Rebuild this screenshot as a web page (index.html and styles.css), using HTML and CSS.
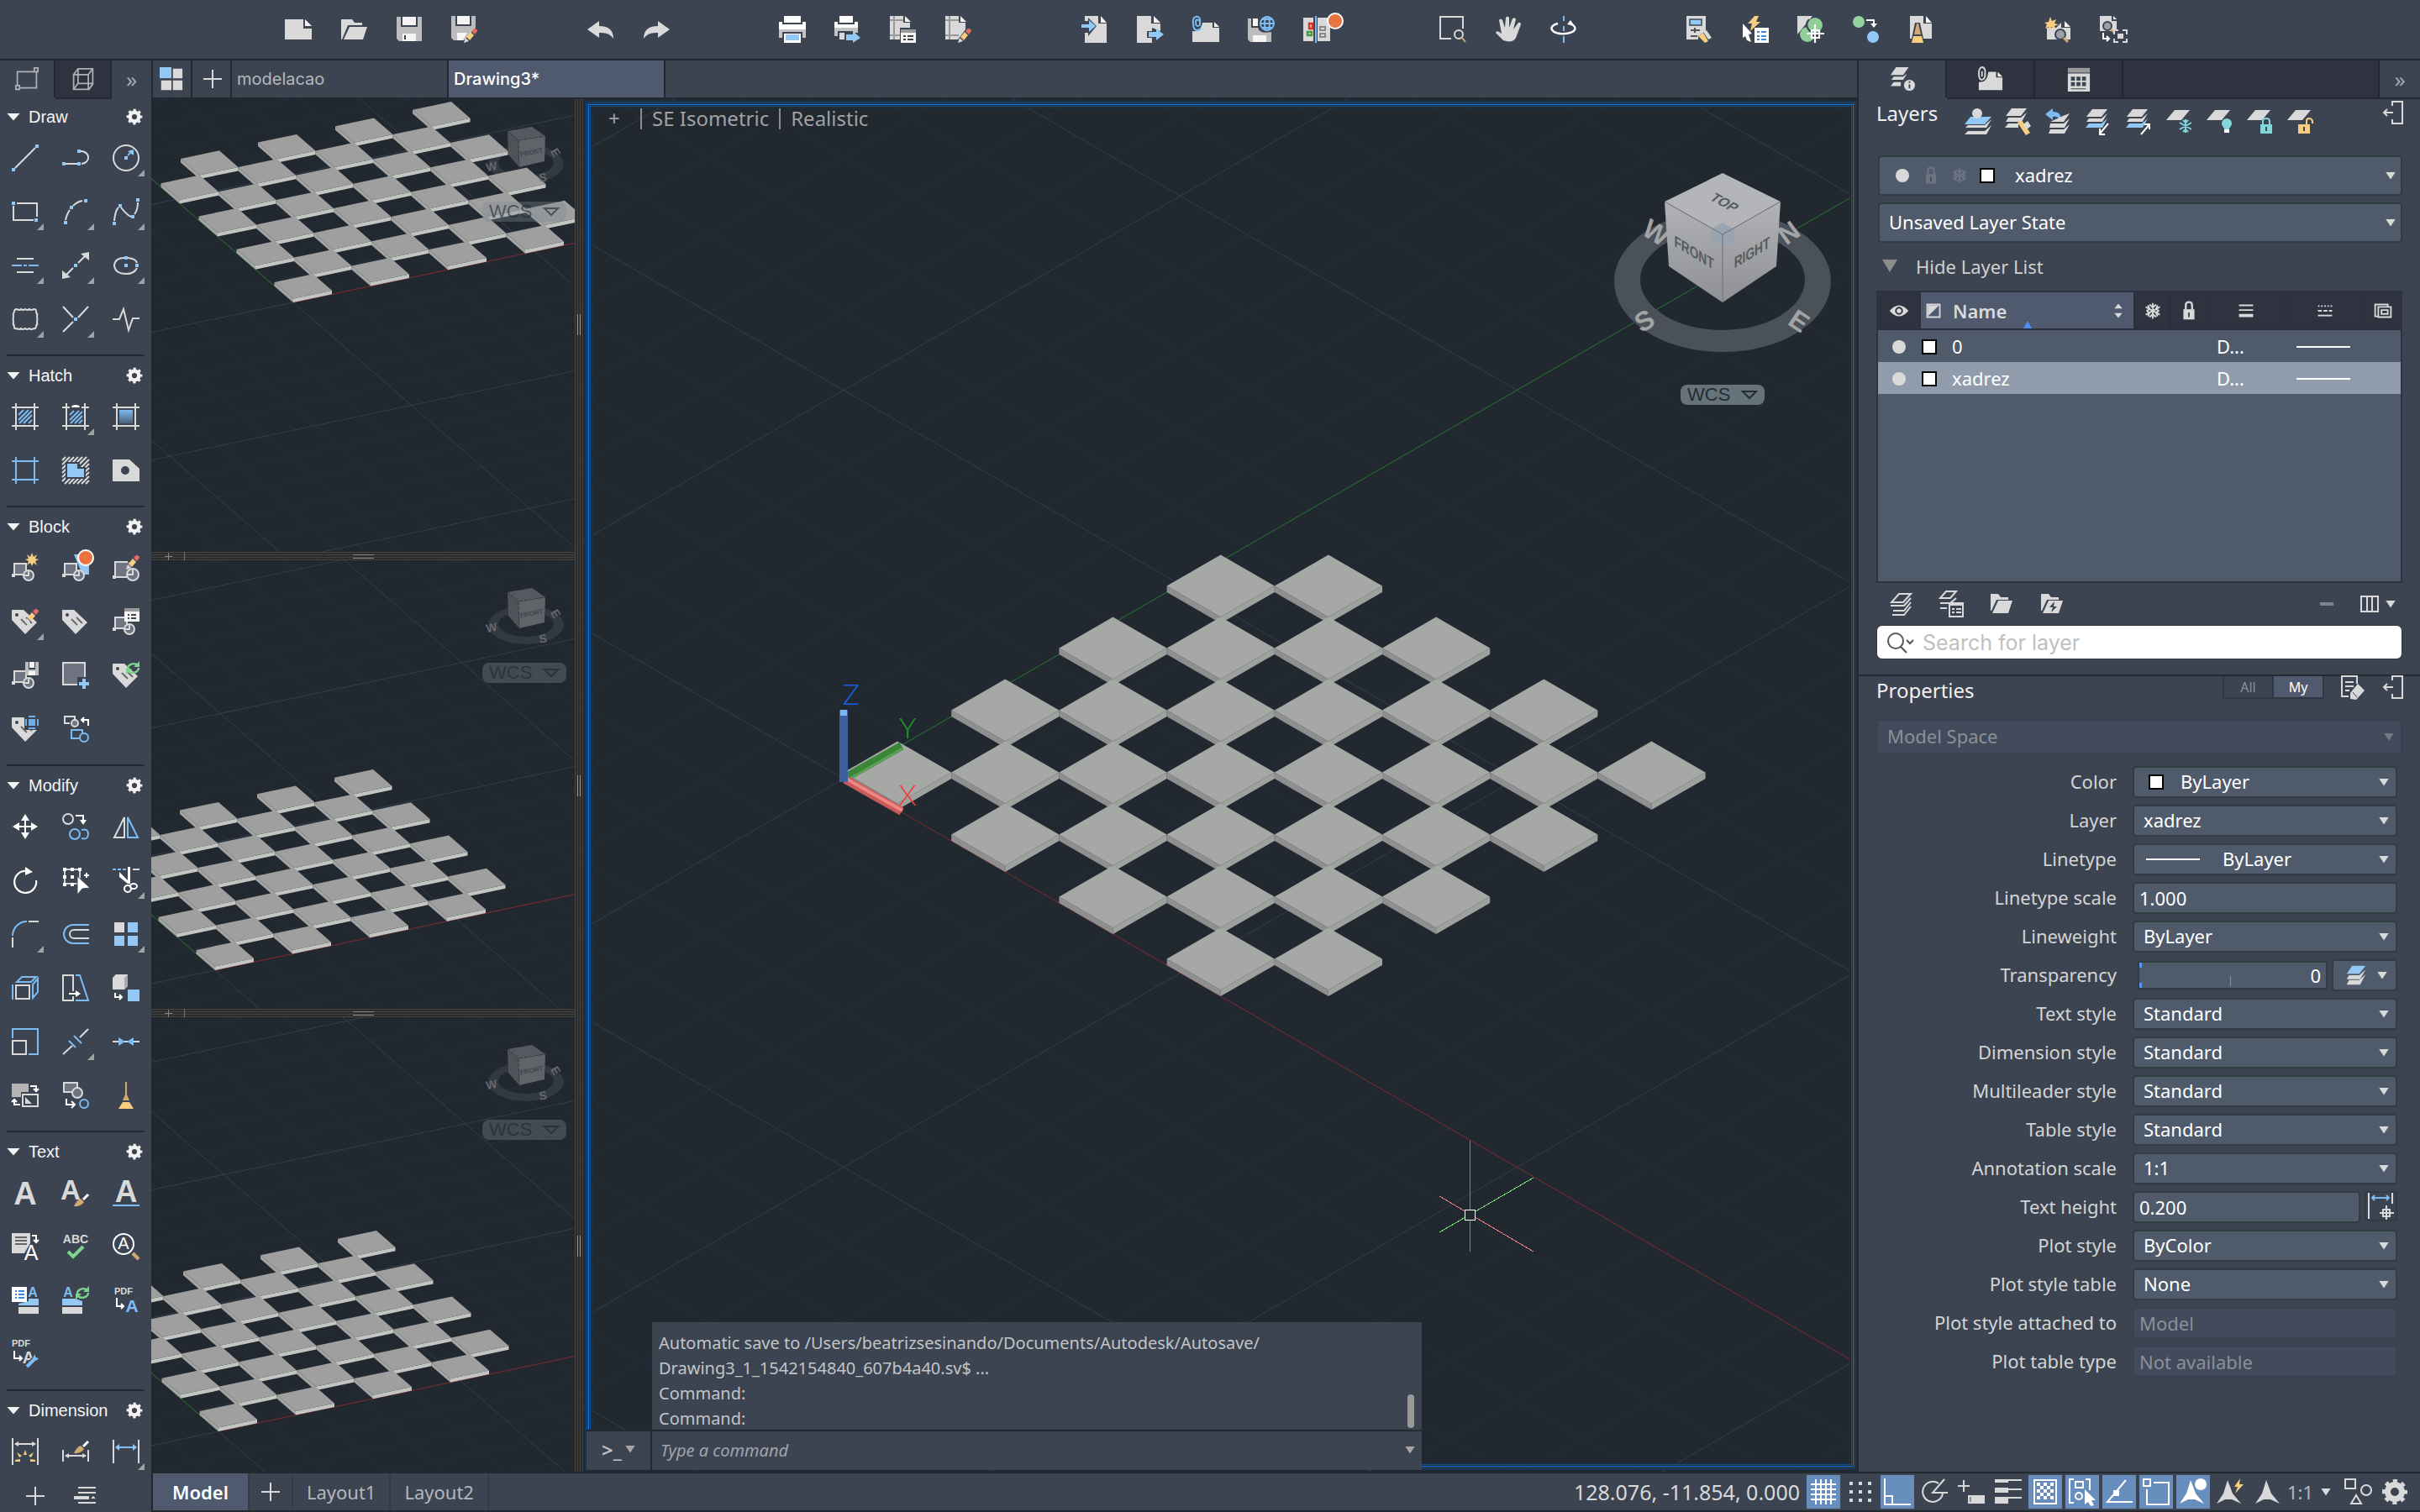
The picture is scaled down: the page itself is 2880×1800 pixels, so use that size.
FILE: index.html
```html
<!DOCTYPE html>
<html lang="en">
<head>
    <meta charset="utf-8">
    <meta name="viewport" content="width=device-width, initial-scale=1">
    <title>Drawing3</title>
    <link rel="stylesheet" href="styles.css">
</head>
<body>

<svg class="paints" aria-hidden="true">
    <defs>
        <linearGradient id="fade" x1="0" y1="0" x2="0" y2="1"><stop offset="0" stop-color="#7cbcf3"/><stop offset="1" stop-color="#4d6078"/></linearGradient>
        <linearGradient id="cubeFace" x1="0" y1="0" x2="0" y2="1"><stop offset="0" stop-color="#b0b2b5"/><stop offset="1" stop-color="#8f9194"/></linearGradient>
    </defs>
</svg>

<!-- icon sprite -->
<svg class="sprite" aria-hidden="true">
    <defs>
        <g id="pencil"><path fill="#f7cd80" d="M5 5L9 9L4 15L0 11Z"/><path fill="#e96a62" d="M6 4L9 1Q13 1 13 4L10 8Z"/><path fill="#d9d9d9" d="M-1 12L3 16L-3 18Z"/></g>
        <g id="blockmini"><path fill="#6f7480" d="M3 9H17V23H3Z"/><path class="sl" d="M3 24V9H17V17M3 22H14"/><path class="fl" d="M0 21h4v4H0z"/><circle cx="20" cy="23" r="6" class="ring"/><path class="sl" d="M20 17V23H15"/></g>
        <g id="tag"><path class="fl" d="M0 2H14L30 17L16 31L0 14Z"/><circle cx="6" cy="8" r="2" fill="#3c4452"/><path stroke="#6b6b6b" stroke-width="2" d="M11 13L18 20M17 11L24 18"/></g>
        <g id="cycle"><path fill="none" stroke="#7fd48b" stroke-width="2.4" d="M2 9A7 6 0 0 1 14 5M15 8A7 6 0 0 1 3 12"/><path fill="#7fd48b" d="M16 0V7H9ZM0 16V9H7Z"/></g>
        <g id="floppy"><path fill="#bdbdbd" d="M0 0H4V9H12V0H16V16H2L0 14Z"/><path fill="#f4f4f4" d="M5 0H11V7H5ZM4 11H12V16H4Z"/></g>
    </defs>

    <symbol id="new" viewBox="0 0 32 32"><path class="fl" d="M0 4H22V15H32V28H0Z"/><path fill="#f4f4f4" d="M24 4L32 12H24Z"/></symbol>
    <symbol id="open" viewBox="0 0 32 32"><path class="fl" d="M1 4H14L17 8H26V11H9L2 28H1ZM11 13H32L27 28H4Z"/></symbol>
    <symbol id="save" viewBox="0 0 32 32"><path fill="#bdbdbd" d="M1 1H6V13H26V1H31V30H4L1 27Z"/><path fill="#f4f4f4" d="M8 1H24V11H8ZM8 21H24V30H8Z"/><path fill="#3c4452" d="M10 23h2v5h-2z"/></symbol>
    <symbol id="saveas" viewBox="0 0 32 32"><path fill="#bdbdbd" d="M0 0H5V12H24V0H29V14L15 29H3L0 26Z"/><path fill="#f4f4f4" d="M7 0H22V10H7ZM7 20H19L14 29H7Z"/><use href="#pencil" x="18" y="14"/></symbol>
    <symbol id="undo" viewBox="0 0 32 32"><path class="fl" d="M0 16L14 6V12Q31 12 31 27Q26 19 14 20V26Z"/></symbol>
    <symbol id="redo" viewBox="0 0 32 32"><path class="fl" d="M32 16L18 6V12Q1 12 1 27Q6 19 18 20V26Z"/></symbol>
    <symbol id="print" viewBox="0 0 32 32"><path fill="#fff" d="M6 0H26V8H6ZM0 7H4V10H28V7H32V16H0Z"/><path fill="#c4c4c4" d="M0 16H32V26H28V19H4V26H0Z"/><path fill="#fff" d="M6 21H26V32H6Z"/><path class="fb" d="M8 22H24V29H8Z"/></symbol>
    <symbol id="plot" viewBox="0 0 32 32"><path fill="#fff" d="M6 0H22V8H6ZM0 7H4V10H24V7H28V14H0Z"/><path fill="#c4c4c4" d="M0 14H28V20H22V18H4V24H0Z"/><path class="fl" d="M6 20H12V28H6Z"/><path class="fb" d="M14 22H22V18L31 26L22 32V29H14Z"/></symbol>
    <symbol id="pagesetup" viewBox="0 0 32 32"><path class="fl" d="M0 0H16V8H24V14H12V28H0Z"/><path fill="#f4f4f4" d="M18 0L25 7H18Z"/><path stroke="#999" stroke-width="2" d="M0 5H16M5 0V28M0 23H12"/><path fill="#f4f4f4" d="M13 20H31V32H13Z"/><path fill="#999" d="M13 16H31V20H13Z"/><path stroke="#444" stroke-width="2" d="M16 24h3M21 24h7M16 28h3M21 28h7"/></symbol>
    <symbol id="plotstyle" viewBox="0 0 32 32"><path class="fl" d="M0 0H16V8H24V16L15 28H0Z"/><path fill="#f4f4f4" d="M18 0L25 7H18Z"/><path stroke="#999" stroke-width="2" d="M0 5H16M5 0V28M0 23H16"/><use href="#pencil" x="18" y="14"/></symbol>
    <symbol id="import" viewBox="0 0 32 32"><path class="fl" d="M4 0H20V9H30V32H4V20H8V24L18 12L8 2V6H4Z"/><path fill="#f4f4f4" d="M23 0L30 8H23Z"/><path class="fb" d="M0 10H9V5L17 12L9 19V14H0Z"/></symbol>
    <symbol id="export" viewBox="0 0 32 32"><path class="fl" d="M0 0H17V9H28V18L18 14V18H12V26H18V32H0Z"/><path fill="#f4f4f4" d="M20 0L28 8H20Z"/><path class="fb" d="M14 19H23V15L32 22L23 29V25H14Z"/></symbol>
    <symbol id="attach" viewBox="0 0 32 32"><path class="fl" d="M0 18Q10 20 12 8H24V14H32V31H0Z"/><path fill="#f4f4f4" d="M26 7L32 13H26Z"/><path class="sb" d="M9 6Q4 2 4 8T9 11V4Q8 0 4 1Q0 2 1 9Q1 17 6 17Q10 16 10 14"/></symbol>
    <symbol id="saveweb" viewBox="0 0 32 32"><path fill="#bdbdbd" d="M0 3H4V14H12Q14 22 28 19V31H3L0 28Z"/><path fill="#f4f4f4" d="M6 3H12V12H6ZM6 23H22V31H6Z"/><g class="sb"><circle cx="23" cy="9" r="8"/><ellipse cx="23" cy="9" rx="3" ry="8"/><path d="M15 9H31M17 4H29M17 14H29"/></g></symbol>
    <symbol id="compare" viewBox="0 0 32 32"><path class="fl" d="M0 2H12V30H0ZM17 2H32V30H17Z"/><path stroke="#7cbcf3" stroke-width="2" d="M15 0V32"/><path fill="none" stroke="#e03127" stroke-width="2.4" d="M7 9h4v6H7z"/><path fill="none" stroke="#3f9c3f" stroke-width="2.4" d="M5 19h5v4H5z"/><path fill="none" stroke="#888" stroke-width="2" d="M20 13h6v4h-6zM20 21h6v4h-6z"/><circle cx="38" cy="6" r="9" fill="#ea7440" stroke="#fff" stroke-width="2"/></symbol>
    <symbol id="zoom" viewBox="0 0 32 32"><path class="sl" d="M14 27H1V1H28V15"/><circle cx="23" cy="22" r="5" class="sl"/><path stroke="#d3a972" stroke-width="2" d="M27 26L31 31"/></symbol>
    <symbol id="pan" viewBox="0 0 32 32"><path class="fl" d="M10 29L1 20Q2 16 8 21L5 5Q7 2 9 5L12 14L13 2Q15-1 17 2V14L21 3Q24 1 25 4L22 16L28 8Q31 7 31 10L25 26Q21 33 10 29Z"/></symbol>
    <symbol id="orbit" viewBox="0 0 32 32"><path class="sb" d="M16 0V6M16 12V18M16 24V32"/><path fill="none" stroke="#fff" stroke-width="2.4" d="M9 9A14 6.500 0 1 0 25 10"/><path fill="#fff" d="M20 10L24 5L29 12Z"/></symbol>
    <symbol id="calc" viewBox="0 0 32 32"><path class="fl" d="M0 0H23V18L14 24V28H0Z"/><path class="fb" stroke="#3c4452" stroke-width="1.500" d="M4 4H18V11H4Z"/><path stroke="#555" stroke-width="2" d="M5 17H16M10 14V20M5 24H13"/><path fill="#f7cd80" d="M14 24L20 20L26 30L22 32Z"/><path class="fl" d="M20 19L24 17L30 26L26 28Z"/></symbol>
    <symbol id="quicksel" viewBox="0 0 32 32"><path fill="#f7cd80" d="M15 0H20L17 7H22L10 18L12 9H7Z"/><path fill="#fff" d="M1 9L12 21L8 22L11 31L6 29L4 24L1 26Z"/><path fill="#fff" d="M15 14H32V32H15Z"/><path stroke="#3f87d8" stroke-width="2" d="M18 19h3M23 19h6M18 24h3M23 24h6M18 28h3M23 28h6"/></symbol>
    <symbol id="geo" viewBox="0 0 32 32"><path class="fl" d="M0 0H18L0 22Z"/><circle cx="21" cy="11" r="9" fill="#8fce97"/><circle cx="12" cy="22" r="9" fill="#8fce97"/><path stroke="#3c4452" stroke-width="2" fill="none" d="M14 4Q8 10 14 17Q20 20 20 28"/><path stroke="#fff" stroke-width="2.200" fill="none" d="M21 10V32M11 21H32M17 17H26V26H17Z"/></symbol>
    <symbol id="match" viewBox="0 0 32 32"><circle cx="7" cy="7" r="7" fill="#93d39c"/><circle cx="24" cy="25" r="7" class="fb"/><path stroke="#fff" stroke-width="2" fill="none" d="M16 5H25V10"/><path fill="#fff" d="M21 9H29L25 14Z"/></symbol>
    <symbol id="purge" viewBox="0 0 32 32"><path class="fl" d="M2 0H18V9H28V27H18L14 8H8L4 27H2Z"/><path fill="#f4f4f4" d="M21 0L28 8H21Z"/><path fill="#d3a972" d="M10 9H12L15 22H7Z"/><path fill="#f7cd80" d="M6 24H16L18 32H4Z"/></symbol>
    <symbol id="findnew" viewBox="0 0 32 32"><path class="fl" d="M3 14H14L20 8V14H31V28H3Z"/><path fill="#f4f4f4" d="M24 6L31 13H24Z"/><path fill="#f7cd80" d="M7 1L9 6L14 4L12 9L17 10L12 12L14 16L8 13L6 18L5 13L1 15L3 10L0 8L5 7Z"/><circle cx="19" cy="22" r="6" fill="#9aa0aa" stroke="#3c4452" stroke-width="2"/><path stroke="#d3a972" stroke-width="3" d="M23 26L28 31"/></symbol>
    <symbol id="findrep" viewBox="0 0 32 32"><path class="fl" d="M0 0H14V6H20V18H0Z"/><path fill="#f4f4f4" d="M16 0L20 4H16Z"/><circle cx="9" cy="12" r="5" fill="#9aa0aa" stroke="#3c4452" stroke-width="2"/><path stroke="#d3a972" stroke-width="2" d="M13 16L17 20"/><path stroke="#fff" stroke-width="2" fill="none" d="M4 20V27H11M8 24L11 27L8 30"/><path class="sl" d="M17 22V17H22M27 17H32V22M32 27V31H27M22 31H17V27"/><path class="fl" d="M21 21h7v6h-7z"/></symbol>

    <symbol id="sheet" viewBox="0 0 32 32"><path fill="none" stroke="#aeb1b6" stroke-width="2" d="M3 26V6H26M29 5V28H5"/><path fill="#3c4452" stroke="#aeb1b6" stroke-width="2" d="M26 1h5v5h-5zM1 25h5v5H1z"/></symbol>
    <symbol id="box3d" viewBox="0 0 32 32"><path fill="none" stroke="#aeb1b6" stroke-width="2" d="M3 10L9 2H29V23L24 30H3ZM3 10H23V30M23 10L29 2M9 2V22H29M9 22L3 30"/></symbol>
    <symbol id="tiles" viewBox="0 0 32 32"><path class="fb" d="M0 0H16V15H0Z"/><path class="fl" d="M18 2H31V15H18ZM2 18H16V31H2ZM18 18H31V31H18Z"/></symbol>
    <symbol id="plus" viewBox="0 0 32 32"><path class="sl" d="M16 5V27M5 16H27"/></symbol>
    <symbol id="gear" viewBox="0 0 32 32"><circle cx="16" cy="16" r="12" fill="none" stroke="currentColor" stroke-width="6" stroke-dasharray="4.710" stroke-dashoffset="2.350"/><circle cx="16" cy="16" r="8.500" fill="none" stroke="currentColor" stroke-width="7"/></symbol>

    <symbol id="line" viewBox="0 0 32 32"><path class="sl" d="M4 28L28 4"/><path class="fb" d="M0 28h4v4H0zM28 0h4v4h-4z"/></symbol>
    <symbol id="pline" viewBox="0 0 32 32"><path class="sl" d="M4 23H20M22 8a8 7 0 0 1 1 15"/><path class="fb" d="M0 21h4v4H0zM18 21h4v4h-4zM18 6h4v4h-4z"/></symbol>
    <symbol id="circle" viewBox="0 0 32 32"><circle cx="16" cy="16" r="15" class="sl"/><path class="fb" d="M14 14h4v4h-4zM25 6V13L18 8Z"/><path class="sb" d="M18 13L22 9"/></symbol>
    <symbol id="rect" viewBox="0 0 32 32"><path class="sl" d="M6 6H30V22M26 26H2V9"/><path class="fb" d="M0 4h4v4H0zM27 24h4v4h-4z"/></symbol>
    <symbol id="arc" viewBox="0 0 32 32"><path class="sl" d="M4 26Q5 20 9 14M13 9Q18 4 24 3"/><path class="fb" d="M2 27h4v4H2zM9 9h4v4H9zM26 1h4v4h-4z"/></symbol>
    <symbol id="spline" viewBox="0 0 32 32"><path class="sl" d="M2 27Q3 15 7 11M10 11Q17 20 22 22M26 19Q30 14 30 5"/><path class="fb" d="M0 28h4v4H0zM7 7h4v4H7zM22 20h4v4h-4zM28 0h4v4h-4z"/></symbol>
    <symbol id="mline" viewBox="0 0 32 32"><path class="sl" d="M6 8H26M6 24H26"/><path class="sb" d="M0 16H12M14 16H18M20 16H32"/></symbol>
    <symbol id="ray" viewBox="0 0 32 32"><path class="sl" d="M3 29L13 19M19 13L29 3"/><path class="fl" d="M32 0V10L22 2ZM0 32V22L10 30Z"/><path class="fb" d="M14 14h4v4h-4z"/></symbol>
    <symbol id="ellipse" viewBox="0 0 32 32"><path class="sl" d="M18 7Q28 8 29 13M29 19Q26 26 16 26Q3 26 2 16Q3 7 14 7"/><path class="fb" d="M14 5h4v4h-4zM14 14h4v4h-4zM27 14h4v4h-4z"/></symbol>
    <symbol id="cloud" viewBox="0 0 32 32"><path class="sl" d="M3 7Q3 4 6 4Q9 6 11 4Q13 6 16 4Q19 6 21 4Q23 6 26 4Q30 4 29 8Q31 10 30 13Q31 16 30 19Q31 22 29 24Q29 28 26 27Q23 29 21 27Q18 29 16 27Q13 29 11 27Q9 29 6 27Q2 28 3 24Q1 22 2 19Q1 16 2 13Q1 10 3 7Z"/></symbol>
    <symbol id="cline" viewBox="0 0 32 32"><path class="sl" d="M1 1L13 14M31 1L19 14M13 19L1 31"/><path class="fb" d="M14 14h4v4h-4z"/></symbol>
    <symbol id="helix" viewBox="0 0 32 32"><path class="sl" d="M0 16H8L13 4L19 29L24 15H32"/></symbol>

    <symbol id="hatch" viewBox="0 0 32 32"><path class="sl" d="M5 0V32M27 0V32M0 5H32M0 27H32"/><path class="sb" d="M8 14L14 8M8 20L20 8M9 24L24 9M14 24L24 14M20 24L24 20"/></symbol>
    <symbol id="hatch2" viewBox="0 0 32 32"><path class="sl" d="M5 0V32M27 0V32M0 5H9M23 5H32M0 27H32"/><path fill="#fff" d="M11 5Q11 2 16 2T21 5Z"/><path class="sb" d="M9 14L14 9M9 20L20 9M10 24L24 10M15 24L24 15M20 24L24 20"/></symbol>
    <symbol id="gradient" viewBox="0 0 32 32"><path class="sl" d="M5 0V32M27 0V32M0 5H32M0 27H32"/><path fill="url(#fade)" d="M8 8H24V24H8Z"/></symbol>
    <symbol id="boundary" viewBox="0 0 32 32"><path class="sb" d="M5 0V32M27 0V32M0 5H32M0 27H32"/></symbol>
    <symbol id="wipeout" viewBox="0 0 32 32"><path class="sl" d="M0 4L4 0M0 9L9 0M0 14L14 0M0 19L19 0M0 24L24 0M0 29L29 0M3 32L32 3M8 32L32 8M13 32L32 13M18 32L32 18M23 32L32 23M28 32L32 28"/><path fill="#3c4452" d="M4 6H21V12H28V26H4Z"/><path class="fb" d="M6 8H18V14H26V24H6Z"/></symbol>
    <symbol id="region" viewBox="0 0 32 32"><path class="fl" d="M0 3H20L32 14V29H0Z"/><circle cx="15" cy="16" r="5" fill="#3c4452"/></symbol>

    <symbol id="blknew" viewBox="0 0 32 32"><use href="#blockmini" y="2"/><path fill="#f7cd80" d="M24-2L26 3L30 0L28 5L32 6L28 8L30 13L26 10L24 14L22 10L18 13L20 8L16 6L20 5L18 0L22 3Z"/></symbol>
    <symbol id="blkins" viewBox="0 0 32 32"><path class="fb" d="M14 0H32V24H24Z"/><use href="#blockmini" y="2"/><circle cx="28" cy="4" r="9" fill="#ea7440" stroke="#fff" stroke-width="2"/></symbol>
    <symbol id="blkedit" viewBox="0 0 32 32"><path fill="#6f7480" d="M3 9H22V26H3Z"/><path class="sl" d="M3 28V9H18M3 27H17"/><path class="fl" d="M0 25h4v4H0z"/><circle cx="24" cy="24" r="7" class="ring"/><path class="sl" d="M24 17V24H18"/><use href="#pencil" x="19" y="0"/></symbol>
    <symbol id="tagedit" viewBox="0 0 32 32"><use href="#tag"/><use href="#pencil" x="19" y="0"/></symbol>
    <symbol id="tagicon" viewBox="0 0 32 32"><use href="#tag"/></symbol>
    <symbol id="blklist" viewBox="0 0 32 32"><use href="#blockmini" y="2"/><path fill="#999" d="M14 0H32V4H14Z"/><path fill="#f4f4f4" d="M14 4H32V16H14Z"/><path stroke="#444" stroke-width="2" d="M18 8h2M22 8h6M18 12h2M22 12h6"/></symbol>
    <symbol id="blksave" viewBox="0 0 32 32"><use href="#blockmini" y="2"/><use href="#floppy" x="16"/></symbol>
    <symbol id="blkadd" viewBox="0 0 32 32"><path fill="#6f7480" stroke="#d9d9d9" stroke-width="2" d="M1 1H27V27H1Z"/><path fill="#3c4452" d="M18 18H30V30H18Z"/><path class="fb" d="M24 20h4v4h4v4h-4v4h-4v-4h-4v-4h4z"/></symbol>
    <symbol id="tagsync" viewBox="0 0 32 32"><use href="#tag"/><use href="#cycle" x="16" y="-1"/></symbol>
    <symbol id="tagview" viewBox="0 0 32 32"><use href="#tag"/><path fill="#3c4452" d="M15-1H33V17H15Z"/><path fill="#72aee6" d="M20 4h8v8h-8zM20 0h8v2h-8zM20 14h8v2h-8zM16 4h2v8h-2zM30 4h2v8h-2z"/></symbol>
    <symbol id="blkrep" viewBox="0 0 32 32"><path class="sl" d="M3 10V1H15V8M3 9H9"/><circle cx="15" cy="9" r="4" class="ring"/><path class="sb" d="M11 27V17H24V22M10 27H20"/><circle cx="26" cy="26" r="5" class="sb"/><path stroke="#fff" stroke-width="2" fill="none" d="M31 12V5H23M26 2L23 5L26 8"/></symbol>

    <symbol id="move" viewBox="0 0 32 32"><path stroke="#fff" stroke-width="2" d="M16 4V28M4 16H28"/><path fill="#fff" d="M16 1L21 9H11ZM16 31L21 23H11ZM1 16L9 11V21ZM31 16L23 11V21Z"/></symbol>
    <symbol id="copy" viewBox="0 0 32 32"><circle cx="7" cy="7" r="6" class="sl"/><circle cx="15" cy="25" r="6" class="sb"/><path class="sb" d="M23 20Q31 18 31 25T23 30"/><path stroke="#fff" stroke-width="2" fill="none" d="M16 3H25V9"/><path fill="#fff" d="M21 8H29L25 14Z"/></symbol>
    <symbol id="mirror" viewBox="0 0 32 32"><path class="sl" d="M14 5V29H2Z"/><path class="sb" d="M18 5V29H30Z"/></symbol>
    <symbol id="rotate" viewBox="0 0 32 32"><path fill="none" stroke="#fff" stroke-width="2.200" d="M17 5A13 13 0 1 0 29 16"/><path fill="#fff" d="M16 0L25 6L16 10Z"/></symbol>
    <symbol id="stretch" viewBox="0 0 32 32"><path fill="none" stroke="#fff" stroke-width="1.500" d="M3 3H21V20H3Z"/><path fill="#fff" d="M1 1h4v4H1zM10 1h4v4h-4zM19 1h4v4h-4zM1 10h4v4H1zM10 10h4v4h-4zM1 19h4v4H1zM10 19h4v4h-4z"/><path fill="#fff" stroke="#3c4452" d="M18 11L33 25L24 26L18 33Z"/><path stroke="#fff" stroke-width="2" d="M26 10h6M29 7v6"/></symbol>
    <symbol id="trim" viewBox="0 0 32 32"><path class="sb" d="M0 3H4M6 3H10M12 3H16"/><path class="sl" d="M24 3H32"/><path fill="#fff" d="M8 6L20 18L18 20L8 12ZM18 0H21V20H18Z"/><circle cx="18" cy="26" r="4" fill="none" stroke="#fff" stroke-width="2"/><ellipse cx="25" cy="23" rx="4" ry="3" fill="none" stroke="#fff" stroke-width="2"/></symbol>
    <symbol id="fillet" viewBox="0 0 32 32"><path class="sb" d="M1 18A17 17 0 0 1 18 1"/><path class="sl" d="M20 1H32M1 20V32"/></symbol>
    <symbol id="offset" viewBox="0 0 32 32"><path class="sb" d="M32 5H13A11 11 0 0 0 13 27H32"/><path class="sl" d="M32 11H14A5 5 0 0 0 14 21H32"/></symbol>
    <symbol id="array" viewBox="0 0 32 32"><path class="fl" d="M2 2H14V14H2Z"/><path class="fb" d="M18 2H30V14H18ZM2 18H14V30H2ZM18 18H30V30H18Z"/></symbol>
    <symbol id="presspull" viewBox="0 0 32 32"><path class="sl" d="M5 13H21V29H5Z"/><path class="sb" d="M6 9L12 3H29L23 9ZM1 12V30M25 12L31 5V21L25 28Z"/></symbol>
    <symbol id="taper" viewBox="0 0 32 32"><path class="sl" d="M13 20V1H1V31H13V26"/><path class="sb" d="M16 1H21L31 31H16"/><path stroke="#fff" stroke-width="2" d="M8 23H18"/><path fill="#fff" d="M16 19L22 23L16 27Z"/></symbol>
    <symbol id="flatten" viewBox="0 0 32 32"><path class="fl" d="M0 4L4 0H18V14L14 18H0Z"/><path fill="#aaa" d="M14 4L18 0V14L14 18Z"/><path class="fb" d="M18 18H32V32H18Z"/><path stroke="#fff" stroke-width="2" fill="none" d="M3 22V27H11M8 24L11 27L8 30"/></symbol>
    <symbol id="scale" viewBox="0 0 32 32"><path class="sl" d="M1 15H17V31H1Z"/><path class="sb" d="M1 12V1H31V31H20"/></symbol>
    <symbol id="break" viewBox="0 0 32 32"><path class="sl" d="M1 31L12 21M21 11L31 1"/><path class="sb" d="M8 15L16 23M14 9L23 18"/></symbol>
    <symbol id="join" viewBox="0 0 32 32"><path class="sl" d="M0 16H32"/><path fill="#7cbcf3" d="M7 11L15 16L7 21ZM25 11L17 16L25 21Z"/></symbol>
    <symbol id="draworder" viewBox="0 0 32 32"><path fill="#b5b5b5" d="M0 2H20V12H11V18H0Z"/><path class="sl" d="M13 15H31V29H13Z"/><path class="fl" d="M16 18L24 26H16Z"/><path stroke="#fff" stroke-width="2" fill="none" d="M22 5H29V11M26 8L29 11L32 8M10 27H3V21M0 24L3 21L6 24"/></symbol>
    <symbol id="change" viewBox="0 0 32 32"><path fill="#6f7480" stroke="#d9d9d9" stroke-width="2" d="M2 12V1H18V12Z"/><circle cx="18" cy="13" r="6" class="ring"/><circle cx="26" cy="26" r="5" class="sb"/><path stroke="#fff" stroke-width="2" fill="none" d="M5 20V27H15M11 23L15 27L11 31"/></symbol>
    <symbol id="broom" viewBox="0 0 32 32"><path fill="#d3a972" d="M15 0H17V15L20 22H12L15 15Z"/><path fill="#f7cd80" d="M12 24H20L25 32H7Z"/></symbol>

    <symbol id="mtext" viewBox="0 0 32 32"><text x="16" y="30" text-anchor="middle" class="glyph" font-size="38">A</text></symbol>
    <symbol id="textedit" viewBox="0 0 32 32"><text x="10" y="24" text-anchor="middle" class="glyph" font-size="33">A</text><path fill="#d3a972" d="M14 32Q17 25 22 23L26 27Q22 33 14 32Z"/><path stroke="#fff" stroke-width="3" d="M25 24L31 18"/></symbol>
    <symbol id="textul" viewBox="0 0 32 32"><text x="16" y="27" text-anchor="middle" class="glyph" font-size="37">A</text><path class="sb" d="M0 31H32"/></symbol>
    <symbol id="textfrom" viewBox="0 0 32 32"><path class="fl" d="M0 0H22V12L15 24H0Z"/><path stroke="#666" stroke-width="2" d="M4 5H18M4 9H18M4 13H18"/><path stroke="#fff" stroke-width="2" fill="none" d="M24 3H29V10M26 8L29 11L32 8"/><text x="23" y="32" text-anchor="middle" class="glyph thin" font-size="25">A</text></symbol>
    <symbol id="spell" viewBox="0 0 32 32"><text x="16" y="12" text-anchor="middle" class="glyph" font-size="14">ABC</text><path fill="none" stroke="#7fd48b" stroke-width="4" d="M7 22L13 28L25 16"/></symbol>
    <symbol id="textfind" viewBox="0 0 32 32"><circle cx="13" cy="13" r="12" fill="none" stroke="#fff" stroke-width="2"/><text x="13" y="19" text-anchor="middle" class="glyph thin" font-size="20">A</text><path stroke="#d3a972" stroke-width="4" d="M24 24L31 31"/></symbol>
    <symbol id="tstyle" viewBox="0 0 32 32"><path class="fb" d="M8 20L20 17V14H32V22H8Z"/><path class="fl" d="M8 24H32V32H8Z"/><path fill="#fff" d="M0 0H18V18H0Z"/><path stroke="#3f87d8" stroke-width="2" d="M4 5h2M8 5h7M4 9h2M8 9h7M4 13h2M8 13h7"/><text x="25" y="12" text-anchor="middle" class="glyph blue" font-size="16">A</text></symbol>
    <symbol id="tupdate" viewBox="0 0 32 32"><path class="fb" d="M0 14H16L24 17V22H0Z"/><path class="fl" d="M0 24H24V32H0Z"/><text x="7" y="12" text-anchor="middle" class="glyph blue" font-size="16">A</text><use href="#cycle" x="16" y="-1"/></symbol>
    <symbol id="pdftext" viewBox="0 0 32 32"><text x="13" y="9" text-anchor="middle" class="glyph" font-size="11">PDF</text><path stroke="#fff" stroke-width="2" fill="none" d="M5 13V23H13M10 20L13 23L10 26"/><text x="23" y="30" text-anchor="middle" class="glyph blue" font-size="21">A</text></symbol>
    <symbol id="pdfset" viewBox="0 0 32 32"><text x="11" y="7" text-anchor="middle" class="glyph" font-size="11">PDF</text><path stroke="#fff" stroke-width="2" fill="none" d="M3 12V21H12M9 18L12 21L9 24"/><text x="20" y="27" text-anchor="middle" class="glyph" font-size="20">A</text><path stroke="#3c4452" stroke-width="7" d="M17 32L29 20"/><path stroke="#7cbcf3" stroke-width="4" d="M18 31L29 20"/><path fill="#7cbcf3" d="M25 20L28 16V20L32 21Q30 25 26 23Z"/></symbol>
    <symbol id="dimquick" viewBox="0 0 32 32"><path class="sl" d="M1 0V32M31 0V32M4 7H28"/><path class="fl" d="M3 7L8 4V10ZM29 7L24 4V10Z"/><path fill="#f7cd80" d="M14 20L16 14L18 20ZM9 23L6 17L12 21ZM23 23L26 17L20 21ZM4 26L10 25V28H4ZM28 26L22 25V28H28Z"/></symbol>
    <symbol id="dimedit" viewBox="0 0 32 32"><path class="sl" d="M1 14V28M31 14V28M4 21H28"/><path class="fl" d="M3 21L8 18V24ZM29 21L24 18V24Z"/><path fill="#d3a972" d="M14 18Q17 11 22 9L26 13Q22 19 14 18Z"/><path stroke="#fff" stroke-width="3" d="M25 10L31 4"/></symbol>
    <symbol id="dimlin" viewBox="0 0 32 32"><path class="sl" d="M1 2V30M31 2V30"/><path class="sb" d="M5 11H27"/><path class="fb" d="M3 11L8 7V15ZM29 11L24 7V15Z"/></symbol>
    <symbol id="lines" viewBox="0 0 32 32"><path class="sl" d="M8 6H29M8 12H29M8 24H29"/><path class="fl" d="M3 16H21V20H3ZM23 19L26 16L29 19Z"/></symbol>

    <symbol id="layinfo" viewBox="0 0 32 32"><path class="fl" d="M8 1H24L17 11H1ZM5 13H17L22 9L17 17H2ZM5 20H14V25H1Z"/><circle cx="25" cy="24" r="7" class="fl"/><path stroke="#3c4452" stroke-width="2" d="M25 19v2M25 23v5"/></symbol>
    <symbol id="clip" viewBox="0 0 32 32"><path class="fl" d="M1 20Q12 20 13 7H23V14H31V30H1Z"/><path fill="#f4f4f4" d="M25 7L31 13H25Z"/><path fill="none" stroke="#2f3340" stroke-width="5" d="M9 12V5Q7 1 4 2Q1 3 1 9Q1 17 5 17Q9 16 9 10"/><path class="sl" d="M5 13V6M9 13V5Q8 1 5 1Q1 2 1 9Q1 17 5 17Q9 16 9 10"/></symbol>
    <symbol id="grid9" viewBox="0 0 32 32"><path class="fl" d="M2 9H30V32H2Z"/><path fill="#999" d="M2 2H30V8H2Z"/><path fill="#3c4452" d="M6 13h5v5H6zM13 13h5v5h-5zM20 13h5v5h-5zM6 20h5v5H6zM13 20h5v5h-5zM20 20h5v5h-5zM6 28h19v1H6z"/></symbol>
    <symbol id="lay1" viewBox="0 0 32 32"><path class="fb" d="M7 10H32L24 19H0Z"/><circle cx="15" cy="6" r="6" class="fl"/><path class="fl" d="M4 20H24L32 13L26 23H1ZM4 27H24L32 20L26 31H0Z"/></symbol>
    <symbol id="lay2" viewBox="0 0 32 32"><path class="fl" d="M8 0H26L19 9H1ZM4 11H19L26 5L20 16H1ZM4 18H16V23H0Z"/><path fill="#f7cd80" d="M15 17L20 14L30 29L25 32Z"/><path class="fl" d="M22 19L27 15L31 21L26 25Z"/></symbol>
    <symbol id="lay3" viewBox="0 0 32 32"><path fill="#7cbcf3" d="M0 7L9 0V4Q20 4 18 14Q15 9 9 10V14Z"/><path class="fl" d="M21 9L29 6L22 16H6ZM6 18H22L29 12L23 23H5ZM6 25H22L29 19L23 30H4Z"/></symbol>
    <symbol id="lay4" viewBox="0 0 32 32"><path class="fl" d="M8 1H26L19 10H1ZM4 12H19L26 6L20 16H1Z"/><path class="fb" d="M4 18H19L26 12L20 23H0Z"/><path stroke="#fff" stroke-width="2" fill="none" d="M27 18L17 30M17 24V31H23"/></symbol>
    <symbol id="lay5" viewBox="0 0 32 32"><path class="fl" d="M8 1H26L19 10H1ZM4 12H19L26 6L20 16H1Z"/><path class="fb" d="M4 18H19L26 12L20 23H0Z"/><path stroke="#fff" stroke-width="2" fill="none" d="M18 31L28 19M22 19H28V25"/></symbol>
    <symbol id="lay6" viewBox="0 0 32 32"><path class="fl" d="M10 2H28L18 14H0Z"/><path stroke="#84d6dd" stroke-width="2" fill="none" d="M23 13V29M16 17L30 25M30 17L16 25M20 14L23 17L26 14M20 28L23 25L26 28"/></symbol>
    <symbol id="lay7" viewBox="0 0 32 32"><path class="fl" d="M10 2H28L18 14H0Z"/><circle cx="24" cy="18" r="6" fill="#84d6dd"/><path fill="#84d6dd" d="M21 20h6v5h-6z"/><path fill="#fff" d="M21 25h6v4h-6z"/></symbol>
    <symbol id="lay8" viewBox="0 0 32 32"><path class="fl" d="M10 2H28L18 14H0Z"/><path fill="#84d6dd" d="M16 19H30V30H16Z"/><path fill="none" stroke="#84d6dd" stroke-width="2" d="M19 19V15Q19 12 23 12T27 15V19"/><path fill="#3c4452" d="M22 22h2v5h-2z"/></symbol>
    <symbol id="lay9" viewBox="0 0 32 32"><path class="fl" d="M10 2H28L18 14H0Z"/><path fill="#f7cd80" d="M13 19H27V30H13Z"/><path fill="none" stroke="#f7cd80" stroke-width="2" d="M23 19V15Q23 12 26 12T30 15V18"/><path fill="#3c4452" d="M19 22h2v5h-2z"/></symbol>
    <symbol id="exit" viewBox="0 0 32 32"><path class="sl" d="M15 8V3H27V29H15V24"/><path class="sl" d="M5 16H16M9 12L5 16L9 20"/></symbol>
    <symbol id="lock" viewBox="0 0 32 32"><path fill="currentColor" d="M9 14H23V27H9Z"/><path fill="none" stroke="currentColor" stroke-width="2.500" d="M12 14V9Q12 5 16 5T20 9V14"/><path fill="#3c4452" d="M15 18h2v6h-2z"/></symbol>
    <symbol id="snow" viewBox="0 0 32 32"><path stroke="currentColor" stroke-width="2" fill="none" d="M16 6V26M7 11L25 21M25 11L7 21M12 8L16 12L20 8M12 24L16 20L20 24M8 16L12 14L10 9M24 16L20 14L22 9M8 16L12 18L10 23M24 16L20 18L22 23"/></symbol>
    <symbol id="eye" viewBox="0 0 32 32"><path class="fl" d="M4 16Q16 2 28 16Q16 30 4 16Z"/><circle cx="16" cy="16" r="4" fill="none" stroke="#2f3340" stroke-width="2"/></symbol>
    <symbol id="half" viewBox="0 0 32 32"><path class="sl" d="M8 8H24V24H8Z"/><path class="fl" d="M9 23V9H23Z"/></symbol>
    <symbol id="sort" viewBox="0 0 32 32"><path class="fl" d="M16 7L21 13H11ZM16 25L21 19H11Z"/></symbol>
    <symbol id="lwt" viewBox="0 0 32 32"><path class="fl" d="M7 8h18v2H7zM7 14h18v2H7zM7 20h18v4H7z"/></symbol>
    <symbol id="lty" viewBox="0 0 32 32"><path stroke="#d9d9d9" stroke-width="2" d="M7 10H25" stroke-dasharray="2"/><path class="sl" d="M7 16H25" stroke-dasharray="5 2"/><path class="sl" d="M7 22H25"/></symbol>
    <symbol id="freezevp" viewBox="0 0 32 32"><path class="sl" d="M6 12V8H22V12M6 12V23H10M10 11H26V24H10ZM14 15H22V20H14Z"/></symbol>
    <symbol id="newlayer" viewBox="0 0 32 32"><path class="sl" d="M14 4H28L19 14H5ZM9 18H4M9 18H20L28 9M7 24H20L28 14M6 29H20L28 19"/></symbol>
    <symbol id="laymgr" viewBox="0 0 32 32"><path class="sl" d="M10 1H22L15 9H3ZM3 15H15L22 9M3 21H11"/><path fill="#3c4452" stroke="#d9d9d9" stroke-width="2" d="M14 15H30V31H14Z"/><path stroke="#d9d9d9" stroke-width="2" d="M14 17H30M17 22h3M22 22h6M17 26h3M22 26h6"/></symbol>
    <symbol id="folder" viewBox="0 0 32 32"><path class="fl" d="M3 4H12L15 8H24V11H10L4 24H3ZM12 12H29L24 27H5Z"/></symbol>
    <symbol id="folderf" viewBox="0 0 32 32"><path class="fl" d="M3 4H12L15 8H24V11H10L4 24H3ZM12 12H29L24 27H5Z"/><path fill="#3c4452" d="M19 13L13 20H17L15 26L22 19H18Z"/></symbol>
    <symbol id="cols" viewBox="0 0 32 32"><path class="sl" d="M5 7H25V25H5ZM12 7V25M18 7V25"/></symbol>
    <symbol id="search" viewBox="0 0 32 32"><g fill="none" stroke="#555" stroke-width="2"><circle cx="11" cy="14" r="9"/><path d="M17 21L24 28M24 13L28 17L32 13"/></g></symbol>
    <symbol id="note" viewBox="0 0 32 32"><path class="sl" d="M11 27H3V3H21V12M7 10H17M7 15H17M7 20H12"/><path class="fl" d="M22 12L30 20L20 31L13 30V23Z"/><path stroke="#3c4452" d="M16 22L21 28"/></symbol>
    <symbol id="bylayer" viewBox="0 0 32 32"><path class="fb" d="M11 4H28L20 14H4Z"/><path class="fl" d="M7 16H20L28 9L21 21H4ZM7 22H20L28 15L21 28H4Z"/></symbol>
    <symbol id="pickh" viewBox="0 0 32 32"><path class="sl" d="M2 0V31M30 0V13"/><path class="sb" d="M7 6H25M9 3L6 6L9 9M23 3L26 6L23 9"/><path class="sl" d="M23 15V32M15 24H32M19 20H27V28H19Z"/></symbol>

    <symbol id="st-grid" viewBox="0 0 32 32"><path stroke="#fff" stroke-width="2" d="M7 1V31M13 1V31M19 1V31M25 1V31M1 7H31M1 13H31M1 19H31M1 25H31"/></symbol>
    <symbol id="st-snap" viewBox="0 0 32 32"><path class="fl" d="M3 4h4v4H3zM14 4h4v4h-4zM25 4h4v4h-4zM3 14h4v4H3zM14 14h4v4h-4zM25 14h4v4h-4zM3 24h4v4H3zM14 24h4v4h-4zM25 24h4v4h-4z"/></symbol>
    <symbol id="st-ortho" viewBox="0 0 32 32"><path fill="none" stroke="#fff" stroke-width="2" d="M1 0V31H32M1 21H10V31"/></symbol>
    <symbol id="st-polar" viewBox="0 0 32 32"><path class="sl" d="M21 6A12 12 0 1 0 26 18M32 17H14L28 1"/></symbol>
    <symbol id="st-dyn" viewBox="0 0 32 32"><path class="sl" d="M7 2V16M0 9H14"/><path class="fl" d="M12 20H32V30H12Z"/><path stroke="#3c4452" d="M15 22V28"/></symbol>
    <symbol id="st-lwt" viewBox="0 0 32 32"><path class="fl" d="M0 1H32V3H16V5H0ZM0 11H16V12H32V14H16V17H0ZM0 22H32V24H16V30H0Z"/></symbol>
    <symbol id="st-tr" viewBox="0 0 32 32"><path fill="none" stroke="#fff" stroke-width="2" d="M3 2H29V30H3Z"/><path stroke="#fff" stroke-width="4" stroke-dasharray="4" d="M6 7H26M6 15H26M6 23H26"/><path stroke="#fff" stroke-width="4" stroke-dasharray="4" stroke-dashoffset="4" d="M6 11H26M6 19H26"/></symbol>
    <symbol id="st-sel" viewBox="0 0 32 32"><path fill="none" stroke="#fff" stroke-width="2" d="M6 1H1V29H6M20 1H25V14M8 4H17V11H8Z"/><circle cx="12" cy="21" r="4" fill="none" stroke="#fff" stroke-width="2"/><path fill="#fff" d="M19 13L32 26H27L30 32L26 33L23 28L19 31Z"/></symbol>
    <symbol id="st-track" viewBox="0 0 32 32"><path fill="none" stroke="#fff" stroke-width="2" d="M24 2L2 28H32"/><path fill="#fff" d="M9 14h7v7H9z"/></symbol>
    <symbol id="st-osnap" viewBox="0 0 32 32"><path fill="none" stroke="#fff" stroke-width="2" d="M1 1H9V9H1ZM13 5H31V31H5V13"/></symbol>
    <symbol id="st-a1" viewBox="0 0 32 32"><path fill="#fff" d="M13 2L19 18L29 30L18 25H10L0 30L8 18Z"/><circle cx="25" cy="7" r="7" fill="#fff"/></symbol>
    <symbol id="st-a2" viewBox="0 0 32 32"><path class="fl" d="M13 2L19 18L29 30L18 25H10L0 30L8 18Z"/><path fill="#f7cd80" d="M28 0L21 10H25L22 18L32 7H27Z"/></symbol>
    <symbol id="st-a3" viewBox="0 0 32 32"><path class="fl" d="M15 2L21 18L31 30L20 25H12L2 30L10 18Z"/></symbol>
    <symbol id="st-shapes" viewBox="0 0 32 32"><path class="sl" d="M1 1H13V12H1ZM14 20L20 30H8Z"/><circle cx="26" cy="14" r="6" class="sl"/></symbol>
</svg>

<header class="topbar" role="toolbar" aria-label="Main toolbar">
    <div class="group">
        <button aria-label="New"><svg><use href="#new"/></svg></button>
        <button aria-label="Open"><svg><use href="#open"/></svg></button>
        <button aria-label="Save"><svg><use href="#save"/></svg></button>
        <button aria-label="Save as"><svg><use href="#saveas"/></svg></button>
    </div>
    <div class="group">
        <button aria-label="Undo"><svg><use href="#undo"/></svg></button>
        <button aria-label="Redo"><svg><use href="#redo"/></svg></button>
    </div>
    <div class="group">
        <button aria-label="Print"><svg><use href="#print"/></svg></button>
        <button aria-label="Publish"><svg><use href="#plot"/></svg></button>
        <button aria-label="Page setup"><svg><use href="#pagesetup"/></svg></button>
        <button aria-label="Plot styles"><svg><use href="#plotstyle"/></svg></button>
    </div>
    <div class="group">
        <button aria-label="Import"><svg><use href="#import"/></svg></button>
        <button aria-label="Export"><svg><use href="#export"/></svg></button>
        <button aria-label="Attach"><svg><use href="#attach"/></svg></button>
        <button aria-label="Save to web"><svg><use href="#saveweb"/></svg></button>
        <button aria-label="Compare"><svg><use href="#compare"/></svg></button>
    </div>
    <div class="group">
        <button aria-label="Zoom"><svg><use href="#zoom"/></svg></button>
        <button aria-label="Pan"><svg><use href="#pan"/></svg></button>
        <button aria-label="Orbit"><svg><use href="#orbit"/></svg></button>
    </div>
    <div class="group">
        <button aria-label="Calculator"><svg><use href="#calc"/></svg></button>
        <button aria-label="Quick select"><svg><use href="#quicksel"/></svg></button>
        <button aria-label="Geometry"><svg><use href="#geo"/></svg></button>
        <button aria-label="Match"><svg><use href="#match"/></svg></button>
        <button aria-label="Purge"><svg><use href="#purge"/></svg></button>
    </div>
    <div class="group">
        <button aria-label="New view"><svg><use href="#findnew"/></svg></button>
        <button aria-label="Named views"><svg><use href="#findrep"/></svg></button>
    </div>
</header>

<main class="workspace">
    <aside class="palette">
        <div class="mode-tabs">
            <button class="on" aria-label="Drafting"><svg><use href="#sheet"/></svg></button>
            <button aria-label="Modeling"><svg><use href="#box3d"/></svg></button>
            <button class="more" aria-label="More">»</button>
        </div>
        <div class="tools">
            <section>
                <h2>Draw <button aria-label="Draw settings"><svg><use href="#gear"/></svg></button></h2>
                <div class="tool-grid">
                    <button aria-label="Line"><svg><use href="#line"/></svg></button>
                    <button aria-label="Polyline"><svg><use href="#pline"/></svg></button>
                    <button class="fly" aria-label="Circle"><svg><use href="#circle"/></svg></button>
                    <button class="fly" aria-label="Rectangle"><svg><use href="#rect"/></svg></button>
                    <button class="fly" aria-label="Arc"><svg><use href="#arc"/></svg></button>
                    <button class="fly" aria-label="Spline"><svg><use href="#spline"/></svg></button>
                    <button class="fly" aria-label="Multiline"><svg><use href="#mline"/></svg></button>
                    <button class="fly" aria-label="Ray"><svg><use href="#ray"/></svg></button>
                    <button class="fly" aria-label="Ellipse"><svg><use href="#ellipse"/></svg></button>
                    <button class="fly" aria-label="Revision cloud"><svg><use href="#cloud"/></svg></button>
                    <button class="fly" aria-label="Construction line"><svg><use href="#cline"/></svg></button>
                    <button aria-label="Break line"><svg><use href="#helix"/></svg></button>
                </div>
            </section>
            <section>
                <h2>Hatch <button aria-label="Hatch settings"><svg><use href="#gear"/></svg></button></h2>
                <div class="tool-grid">
                    <button aria-label="Hatch"><svg><use href="#hatch"/></svg></button>
                    <button class="fly" aria-label="Edit hatch"><svg><use href="#hatch2"/></svg></button>
                    <button aria-label="Gradient"><svg><use href="#gradient"/></svg></button>
                    <button aria-label="Boundary"><svg><use href="#boundary"/></svg></button>
                    <button aria-label="Wipeout"><svg><use href="#wipeout"/></svg></button>
                    <button aria-label="Region"><svg><use href="#region"/></svg></button>
                </div>
            </section>
            <section>
                <h2>Block <button aria-label="Block settings"><svg><use href="#gear"/></svg></button></h2>
                <div class="tool-grid">
                    <button aria-label="Create block"><svg><use href="#blknew"/></svg></button>
                    <button aria-label="Insert block"><svg><use href="#blkins"/></svg></button>
                    <button aria-label="Edit block"><svg><use href="#blkedit"/></svg></button>
                    <button class="fly" aria-label="Edit attribute"><svg><use href="#tagedit"/></svg></button>
                    <button aria-label="Define attribute"><svg><use href="#tagicon"/></svg></button>
                    <button aria-label="Block properties"><svg><use href="#blklist"/></svg></button>
                    <button aria-label="Write block"><svg><use href="#blksave"/></svg></button>
                    <button aria-label="Add block"><svg><use href="#blkadd"/></svg></button>
                    <button aria-label="Sync attributes"><svg><use href="#tagsync"/></svg></button>
                    <button aria-label="Attribute display"><svg><use href="#tagview"/></svg></button>
                    <button aria-label="Replace block"><svg><use href="#blkrep"/></svg></button>
                </div>
            </section>
            <section>
                <h2>Modify <button aria-label="Modify settings"><svg><use href="#gear"/></svg></button></h2>
                <div class="tool-grid">
                    <button aria-label="Move"><svg><use href="#move"/></svg></button>
                    <button aria-label="Copy"><svg><use href="#copy"/></svg></button>
                    <button aria-label="Mirror"><svg><use href="#mirror"/></svg></button>
                    <button aria-label="Rotate"><svg><use href="#rotate"/></svg></button>
                    <button aria-label="Stretch"><svg><use href="#stretch"/></svg></button>
                    <button class="fly" aria-label="Trim"><svg><use href="#trim"/></svg></button>
                    <button class="fly" aria-label="Fillet"><svg><use href="#fillet"/></svg></button>
                    <button aria-label="Offset"><svg><use href="#offset"/></svg></button>
                    <button class="fly" aria-label="Array"><svg><use href="#array"/></svg></button>
                    <button aria-label="Press pull"><svg><use href="#presspull"/></svg></button>
                    <button aria-label="Taper"><svg><use href="#taper"/></svg></button>
                    <button aria-label="Flatten"><svg><use href="#flatten"/></svg></button>
                    <button aria-label="Scale"><svg><use href="#scale"/></svg></button>
                    <button class="fly" aria-label="Break"><svg><use href="#break"/></svg></button>
                    <button aria-label="Join"><svg><use href="#join"/></svg></button>
                    <button aria-label="Draw order"><svg><use href="#draworder"/></svg></button>
                    <button aria-label="Change space"><svg><use href="#change"/></svg></button>
                    <button aria-label="Delete duplicates"><svg><use href="#broom"/></svg></button>
                </div>
            </section>
            <section>
                <h2>Text <button aria-label="Text settings"><svg><use href="#gear"/></svg></button></h2>
                <div class="tool-grid">
                    <button aria-label="Multiline text"><svg><use href="#mtext"/></svg></button>
                    <button aria-label="Edit text"><svg><use href="#textedit"/></svg></button>
                    <button aria-label="Single line text"><svg><use href="#textul"/></svg></button>
                    <button aria-label="Convert text"><svg><use href="#textfrom"/></svg></button>
                    <button aria-label="Spelling"><svg><use href="#spell"/></svg></button>
                    <button aria-label="Find text"><svg><use href="#textfind"/></svg></button>
                    <button aria-label="Text style"><svg><use href="#tstyle"/></svg></button>
                    <button aria-label="Update text"><svg><use href="#tupdate"/></svg></button>
                    <button aria-label="PDF to text"><svg><use href="#pdftext"/></svg></button>
                    <button aria-label="PDF settings"><svg><use href="#pdfset"/></svg></button>
                </div>
            </section>
            <section>
                <h2>Dimension <button aria-label="Dimension settings"><svg><use href="#gear"/></svg></button></h2>
                <div class="tool-grid">
                    <button aria-label="Quick dimension"><svg><use href="#dimquick"/></svg></button>
                    <button aria-label="Edit dimension"><svg><use href="#dimedit"/></svg></button>
                    <button class="fly" aria-label="Linear"><svg><use href="#dimlin"/></svg></button>
                </div>
            </section>
        </div>
        <div class="palette-foot">
            <button aria-label="Add tool set"><svg><use href="#plus"/></svg></button>
            <button aria-label="Tool set list"><svg><use href="#lines"/></svg></button>
        </div>
    </aside>

    <div class="center">
        <nav class="doc-tabs">
            <button class="tile-btn" aria-label="File tabs"><svg><use href="#tiles"/></svg></button>
            <button class="add-btn" aria-label="New drawing"><svg><use href="#plus"/></svg></button>
            <button class="doc">modelacao</button>
            <button class="doc on">Drawing3*</button>
        </nav>

        <div class="viewports">
            <div class="side">
                <div class="vp">
                    <svg class="scene" data-view="side" data-origin="349,360" viewBox="180 118 504 539" preserveAspectRatio="xMinYMin slice"></svg>
                    <svg class="cube-sm" viewBox="570 142 110 84"><use href="#cubeSmall"/></svg>
                    <button class="wcs dim">WCS <svg viewBox="0 0 18 10"><path d="M1 1H17L9 9Z"/></svg></button>
                </div>
                <div class="split-h"></div>
                <div class="vp">
                    <svg class="scene" data-view="side" data-origin="256,1155" viewBox="180 667 504 534" preserveAspectRatio="xMinYMin slice"></svg>
                    <svg class="cube-sm" viewBox="570 142 110 84"><use href="#cubeSmall"/></svg>
                    <button class="wcs dim">WCS <svg viewBox="0 0 18 10"><path d="M1 1H17L9 9Z"/></svg></button>
                </div>
                <div class="split-h"></div>
                <div class="vp">
                    <svg class="scene" data-view="side" data-origin="260,1704" viewBox="180 1211 504 541" preserveAspectRatio="xMinYMin slice"></svg>
                    <svg class="cube-sm" viewBox="570 142 110 84"><use href="#cubeSmall"/></svg>
                    <button class="wcs dim">WCS <svg viewBox="0 0 18 10"><path d="M1 1H17L9 9Z"/></svg></button>
                </div>
            </div>
            <div class="split-v"><i></i><i></i><i></i></div>
            <div class="vp active">
                <svg class="scene" data-view="iso" data-origin="1004,927" viewBox="694 118 1516 1634" preserveAspectRatio="xMidYMid slice"></svg>
                <div class="vp-labels">
                    <button>+</button>
                    <button class="bar">SE Isometric</button>
                    <button class="bar">Realistic</button>
                </div>
                <div class="compass">
                    <svg class="cube" viewBox="1910 190 280 240" aria-hidden="true">
                        <path fill="#4b5158" fill-rule="evenodd" d="M1921 335a129 84 0 1 0 258 0a129 84 0 1 0 -258 0ZM1952 333a98 60 0 1 0 196 0a98 60 0 1 0 -196 0Z"/>
                        <text class="dir" transform="translate(1971 277) rotate(32)">W</text>
                        <text class="dir" transform="translate(2129 277) rotate(-36)">N</text>
                        <text class="dir" transform="translate(1957 382) rotate(-30)">S</text>
                        <text class="dir" transform="translate(2141 382) rotate(34)">E</text>
                        <path fill="#b3b5b8" d="M2050 206L2119 240L2050 279L1981 240Z"/>
                        <path fill="url(#cubeFace)" d="M1981 240L2050 279V360L1986 317Z"/>
                        <path fill="url(#cubeFace)" d="M2119 240L2050 279V360L2114 317Z"/>
                        <path fill="#9aa3b0" d="M2050 265L2064 273V287L2050 294L2036 287V273Z"/>
                        <path fill="none" stroke="#6d6f73" d="M1981 240L2050 279L2119 240M2050 279V360"/>
                        <text class="face" transform="translate(2048 245) rotate(28) skewX(-20)">TOP</text>
                        <text class="face" transform="translate(2016 307) rotate(31) skewX(31)">FRONT</text>
                        <text class="face" transform="translate(2085 307) rotate(-31) skewX(-31)">RIGHT</text>
                    </svg>
                    <button class="wcs">WCS <svg viewBox="0 0 18 10"><path d="M1 1H17L9 9Z"/></svg></button>
                </div>
                <div class="frame"></div>
                <section class="command">
                    <div class="history">
                        <p>Automatic save to /Users/beatrizsesinando/Documents/Autodesk/Autosave/<br>Drawing3_1_1542154840_607b4a40.sv$ ...</p>
                        <p>Command:</p>
                        <p>Command:</p>
                        <i class="thumb"></i>
                    </div>
                    <button class="prompt" aria-label="Command history">&gt;_<i class="caret"></i></button>
                    <div class="entry">
                        <input type="text" aria-label="Command" placeholder="Type a command">
                        <i class="caret"></i>
                    </div>
                </section>
            </div>
        </div>
    </div>

    <aside class="inspector">
        <div class="panel-tabs">
            <button class="on" aria-label="Layers"><svg><use href="#layinfo"/></svg></button>
            <button aria-label="References"><svg><use href="#clip"/></svg></button>
            <button aria-label="Sheets"><svg><use href="#grid9"/></svg></button>
            <button class="more" aria-label="More panels">»</button>
        </div>

        <div class="layers">
            <header>
                <h2>Layers</h2>
                <div class="layer-tools">
                    <button aria-label="Make current"><svg><use href="#lay1"/></svg></button>
                    <button aria-label="Match layer"><svg><use href="#lay2"/></svg></button>
                    <button aria-label="Previous layer"><svg><use href="#lay3"/></svg></button>
                    <button aria-label="Isolate layer"><svg><use href="#lay4"/></svg></button>
                    <button aria-label="Unisolate layer"><svg><use href="#lay5"/></svg></button>
                    <button aria-label="Freeze layer"><svg><use href="#lay6"/></svg></button>
                    <button aria-label="Layer off"><svg><use href="#lay7"/></svg></button>
                    <button aria-label="Lock layer"><svg><use href="#lay8"/></svg></button>
                    <button aria-label="Unlock layer"><svg><use href="#lay9"/></svg></button>
                </div>
                <button class="exit" aria-label="Detach layers"><svg><use href="#exit"/></svg></button>
            </header>
            <div class="pick tall">
                <span class="state"><i class="dot"></i><svg><use href="#lock"/></svg><svg><use href="#snow"/></svg><i class="swatch"></i></span>
                <select aria-label="Current layer"><option>xadrez</option></select><i class="caret"></i>
            </div>
            <div class="pick tall">
                <select aria-label="Layer state"><option>Unsaved Layer State</option></select><i class="caret"></i>
            </div>
            <button class="disclose"><i class="caret"></i>Hide Layer List</button>
            <div class="layer-list">
                <table>
                    <thead>
                        <tr>
                            <th class="c-eye" aria-label="Visible"><svg><use href="#eye"/></svg></th>
                            <th class="c-name"><span><svg><use href="#half"/></svg>Name<svg class="sort"><use href="#sort"/></svg></span></th>
                            <th class="c-sm" aria-label="Freeze"><svg><use href="#snow"/></svg></th>
                            <th class="c-sm" aria-label="Lock"><svg><use href="#lock"/></svg></th>
                            <th class="c-md" aria-label="Lineweight"><svg><use href="#lwt"/></svg></th>
                            <th class="c-md" aria-label="Linetype"><svg><use href="#lty"/></svg></th>
                            <th class="c-sm" aria-label="New viewport freeze"><svg><use href="#freezevp"/></svg></th>
                        </tr>
                    </thead>
                    <tbody>
                        <tr><td><i class="dot"></i></td><td><i class="swatch"></i>0</td><td></td><td></td><td class="lw">D...</td><td><i class="rule"></i></td><td></td></tr>
                        <tr class="sel"><td><i class="dot"></i></td><td><i class="swatch"></i>xadrez</td><td></td><td></td><td class="lw">D...</td><td><i class="rule"></i></td><td></td></tr>
                    </tbody>
                </table>
            </div>
            <div class="list-tools">
                <button aria-label="New layer"><svg><use href="#newlayer"/></svg></button>
                <button aria-label="Layer manager"><svg><use href="#laymgr"/></svg></button>
                <button aria-label="New group"><svg><use href="#folder"/></svg></button>
                <button aria-label="New filter"><svg><use href="#folderf"/></svg></button>
                <button class="minus" aria-label="Delete layer"><i></i></button>
                <button class="cols" aria-label="Columns"><svg><use href="#cols"/></svg><i class="caret"></i></button>
            </div>
            <label class="search"><svg><use href="#search"/></svg><input type="text" placeholder="Search for layer" aria-label="Search for layer"></label>
        </div>

        <div class="props">
            <header>
                <h2>Properties</h2>
                <div class="seg"><button>All</button><button class="on">My</button></div>
                <button aria-label="Customize"><svg><use href="#note"/></svg></button>
                <button aria-label="Detach properties"><svg><use href="#exit"/></svg></button>
            </header>
            <div class="pick mid off"><select aria-label="Object" disabled><option>Model Space</option></select><i class="caret"></i></div>
            <div class="rows">
                <label for="p1">Color</label>
                <div class="pick"><i class="swatch"></i><select id="p1"><option>ByLayer</option></select><i class="caret"></i></div>
                <label for="p2">Layer</label>
                <div class="pick"><select id="p2"><option>xadrez</option></select><i class="caret"></i></div>
                <label for="p3">Linetype</label>
                <div class="pick"><i class="rule"></i><select id="p3"><option>ByLayer</option></select><i class="caret"></i></div>
                <label for="p4">Linetype scale</label>
                <input id="p4" class="field" type="text" value="1.000">
                <label for="p5">Lineweight</label>
                <div class="pick"><select id="p5"><option>ByLayer</option></select><i class="caret"></i></div>
                <label for="p6">Transparency</label>
                <div class="pair">
                    <div class="slider"><input id="p6" type="range" min="0" max="90" value="0"><output for="p6">0</output></div>
                    <button class="mini" aria-label="Transparency source"><svg><use href="#bylayer"/></svg><i class="caret"></i></button>
                </div>
                <label for="p7">Text style</label>
                <div class="pick"><select id="p7"><option>Standard</option></select><i class="caret"></i></div>
                <label for="p8">Dimension style</label>
                <div class="pick"><select id="p8"><option>Standard</option></select><i class="caret"></i></div>
                <label for="p9">Multileader style</label>
                <div class="pick"><select id="p9"><option>Standard</option></select><i class="caret"></i></div>
                <label for="p10">Table style</label>
                <div class="pick"><select id="p10"><option>Standard</option></select><i class="caret"></i></div>
                <label for="p11">Annotation scale</label>
                <div class="pick"><select id="p11"><option>1:1</option></select><i class="caret"></i></div>
                <label for="p12">Text height</label>
                <div class="pair">
                    <input id="p12" class="field" type="text" value="0.200">
                    <button class="pickh" aria-label="Pick height"><svg><use href="#pickh"/></svg></button>
                </div>
                <label for="p13">Plot style</label>
                <div class="pick"><select id="p13"><option>ByColor</option></select><i class="caret"></i></div>
                <label for="p14">Plot style table</label>
                <div class="pick"><select id="p14"><option>None</option></select><i class="caret"></i></div>
                <label for="p15">Plot style attached to</label>
                <input id="p15" class="field off" type="text" value="Model" disabled>
                <label for="p16">Plot table type</label>
                <input id="p16" class="field off" type="text" value="Not available" disabled>
            </div>
        </div>
    </aside>

    <footer class="status">
        <button class="sheet-tab on">Model</button>
        <button class="sheet-tab add" aria-label="Add layout"><svg><use href="#plus"/></svg></button>
        <button class="sheet-tab">Layout1</button>
        <button class="sheet-tab">Layout2</button>
        <output class="coords">128.076, -11.854, 0.000</output>
        <div class="toggles">
            <button class="on" aria-label="Grid"><svg><use href="#st-grid"/></svg></button>
            <button aria-label="Snap"><svg><use href="#st-snap"/></svg></button>
            <button class="on" aria-label="Ortho"><svg><use href="#st-ortho"/></svg></button>
            <button aria-label="Polar"><svg><use href="#st-polar"/></svg></button>
            <button aria-label="Dynamic input"><svg><use href="#st-dyn"/></svg></button>
            <button aria-label="Lineweight"><svg><use href="#st-lwt"/></svg></button>
            <button class="on" aria-label="Transparency"><svg><use href="#st-tr"/></svg></button>
            <button class="on" aria-label="Selection cycling"><svg><use href="#st-sel"/></svg></button>
            <button class="on" aria-label="Object tracking"><svg><use href="#st-track"/></svg></button>
            <button class="on" aria-label="Object snap"><svg><use href="#st-osnap"/></svg></button>
            <button class="on" aria-label="Annotation visibility"><svg><use href="#st-a1"/></svg></button>
            <button aria-label="Auto scale"><svg><use href="#st-a2"/></svg></button>
            <button aria-label="Annotation scale"><svg><use href="#st-a3"/></svg></button>
            <div class="ratio"><select aria-label="Scale"><option>1:1</option></select><i class="caret"></i></div>
            <button aria-label="Isolate objects"><svg><use href="#st-shapes"/></svg></button>
            <button aria-label="Settings"><svg><use href="#gear"/></svg></button>
        </div>
    </footer>
</main>

<!-- small view cube shared by the side viewports -->
<svg class="sprite" aria-hidden="true">
    <g id="cubeSmall">
        <path fill="#a0a8b0" fill-opacity=".15" fill-rule="evenodd" d="M581 195a45 23 0 1 0 90 0a45 23 0 1 0 -90 0ZM593 194a33 15 0 1 0 66 0a33 15 0 1 0 -66 0Z"/>
        <path fill="#5c6066" d="M604 156L633 151L649 162L617 167Z"/>
        <path fill="#54585e" d="M604 156L617 167L618 199L605 184Z"/>
        <path fill="#676a6f" d="M617 167L649 162L648 192L618 199Z"/>
        <path fill="none" stroke="#393e45" stroke-dasharray="4 2" d="M604 156L617 167L649 162M617 167L618 199"/>
        <text class="tiny" transform="translate(633 184) rotate(-12)">FRONT</text>
        <text class="dir-sm" transform="translate(586 203) rotate(-12)">W</text>
        <text class="dir-sm" transform="translate(647 216) rotate(-8)">S</text>
        <text class="dir-sm" transform="translate(657 184) rotate(60)">E</text>
    </g>
</svg>

<script src="script.js"></script>
</body>
</html>
```

FILE: styles.css
```css
* {
    box-sizing: border-box;
}
html, body {
    height: 100%;
}
body {
    margin: 0;
    display: flex;
    flex-direction: column;
    background-color: #3c4452;
    color: #d9d9d9;
    font-family: "Noto Sans", sans-serif;
    font-size: 22px;
    overflow: hidden;
}
button {
    margin: 0;
    padding: 0;
    border: 0;
    background: none;
    color: inherit;
    font: inherit;
}
button svg {
    display: block;
    width: 32px;
    height: 32px;
    overflow: visible;
}
symbol {
    overflow: visible;
}
input, select {
    min-width: 0;
    margin: 0;
    border: 0;
    background: none;
    color: inherit;
    font: inherit;
    outline: none;
}
select {
    appearance: none;
    flex: 1;
    padding: 0;
    opacity: 1;
}
h2 {
    margin: 0;
    font-weight: normal;
}
.sprite {
    display: none;
}
.paints {
    position: absolute;
    width: 0;
    height: 0;
}

/* icon paints */
.fl { fill: #d9d9d9; }
.fb { fill: #93c8f5; }
.sl { fill: none; stroke: #d9d9d9; stroke-width: 2; }
.sb { fill: none; stroke: #7cbcf3; stroke-width: 2; }
.ring { fill: #6f7480; stroke: #d9d9d9; stroke-width: 2; }
.glyph {
    fill: #d9d9d9;
    font-family: "Liberation Sans", sans-serif;
    font-weight: bold;
}
.glyph.thin { fill: #fff; font-weight: normal; }
.glyph.blue { fill: #7cbcf3; }

.caret {
    flex: none;
    width: 12px;
    height: 9px;
    background-color: #d9d9d9;
    clip-path: polygon(0 0, 100% 0, 50% 100%);
}
.dot {
    display: inline-block;
    width: 16px;
    height: 16px;
    border-radius: 50%;
    background-color: #d9d9d9;
}
.swatch {
    display: inline-block;
    flex: none;
    width: 18px;
    height: 18px;
    border: 2px solid #000;
    background-color: #fff;
}
.rule {
    display: inline-block;
    flex: none;
    width: 64px;
    height: 2px;
    background-color: #fff;
}

/* top toolbar */
.topbar {
    display: flex;
    justify-content: center;
    align-items: center;
    gap: 130px;
    height: 72px;
    padding-right: 10px;
    border-bottom: 2px solid #222931;
}
.group {
    display: flex;
    gap: 34px;
}

.workspace {
    flex: 1;
    min-height: 0;
    display: grid;
    grid-template-columns: 180px minmax(0, 1fr) 670px;
    grid-template-rows: minmax(0, 1fr) 48px;
}

/* left palette */
.palette {
    grid-row: 1 / 3;
    display: flex;
    flex-direction: column;
    min-height: 0;
}
.mode-tabs {
    display: grid;
    grid-template-columns: 66px 67px 47px;
    flex: none;
    height: 44px;
}
.mode-tabs button {
    display: flex;
    align-items: center;
    justify-content: center;
    border-right: 2px solid #222931;
    background-color: #2f3340;
    box-shadow: 0 2px #222931;
}
.mode-tabs svg {
    width: 30px;
    height: 28px;
}
.mode-tabs .on {
    background-color: #3c4452;
    box-shadow: none;
}
.mode-tabs .more {
    background-color: #3c4452;
    border-right: 0;
    box-shadow: none;
}
.more {
    color: #a4a7ad;
    font-size: 26px;
    line-height: 1;
}
.tools {
    flex: 1;
    min-height: 0;
    overflow: hidden;
}
.tools section {
    margin: 0 8px;
    padding-bottom: 26px;
    border-bottom: 2px solid #222931;
}
.tools h2 {
    display: flex;
    align-items: center;
    height: 46px;
    margin-bottom: 10px;
    color: #f4f4f4;
    font-family: "Liberation Sans", sans-serif;
    font-size: 20px;
}
.tools h2::before {
    content: "";
    width: 16px;
    height: 9px;
    margin-right: 10px;
    background-color: #f4f4f4;
    clip-path: polygon(0 0, 100% 0, 50% 100%);
}
.tools h2 button {
    margin-left: auto;
    margin-right: 2px;
}
.tools h2 svg {
    width: 20px;
    height: 20px;
}
.tool-grid {
    display: grid;
    grid-template-columns: 32px 32px 32px;
    gap: 32px 28px;
    padding-left: 6px;
}
.fly {
    position: relative;
}
.fly::after {
    content: "";
    position: absolute;
    right: -6px;
    bottom: -6px;
    width: 8px;
    height: 8px;
    background-color: #a3a3a3;
    clip-path: polygon(100% 0, 100% 100%, 0 100%);
}
.palette-foot {
    display: flex;
    gap: 27px;
    height: 50px;
    padding: 12px 0 0 26px;
}

/* document tabs */
.center {
    display: flex;
    flex-direction: column;
    min-width: 0;
    min-height: 0;
}
.doc-tabs {
    display: flex;
    flex: none;
    height: 46px;
    border-bottom: 2px solid #222931;
    border-left: 2px solid #222931;
}
.doc-tabs button {
    border-right: 2px solid #222931;
}
.tile-btn, .add-btn {
    width: 47px;
    padding-left: 8px;
}
.tile-btn svg {
    width: 28px;
    height: 28px;
}
.doc {
    width: 258px;
    padding-left: 6px;
    color: #b4b7bc;
    font-family: Inter, sans-serif;
    font-size: 20px;
    text-align: left;
}
.doc.on {
    background-color: #4f5a6e;
    color: #fff;
    font-weight: 500;
}

/* viewports */
.viewports {
    flex: 1;
    min-height: 0;
    display: grid;
    grid-template-columns: 504px 10px minmax(0, 1fr);
    background-color: #212830;
}
.side {
    display: grid;
    grid-template-rows: minmax(0, 539fr) 10px minmax(0, 534fr) 10px minmax(0, 541fr);
    min-height: 0;
}
.vp {
    position: relative;
    min-width: 0;
    min-height: 0;
    overflow: hidden;
}
.scene {
    position: absolute;
    width: 100%;
    height: 100%;
}
.split-h {
    background:
        linear-gradient(#888, #888) 240px 3px / 25px 1px no-repeat,
        linear-gradient(#888, #888) 240px 7px / 25px 1px no-repeat,
        linear-gradient(#888, #888) 16px 5px / 9px 1px no-repeat,
        linear-gradient(#888, #888) 20px 1px / 1px 9px no-repeat,
        linear-gradient(#777, #777) 39px 0 / 1px 10px no-repeat,
        repeating-linear-gradient(#444342 0 1px, #2c2c2c 1px 3px);
}
.split-v {
    display: flex;
    flex-direction: column;
    align-items: center;
    justify-content: space-between;
    padding: 256px 0;
    background: repeating-linear-gradient(90deg, #444342 0 1px, #2c2c2c 1px 3px);
}
.split-v i {
    width: 4px;
    height: 25px;
    border: solid #999;
    border-width: 0 1px;
}
.cube-sm {
    position: absolute;
    top: 24px;
    right: 4px;
    width: 110px;
    height: 84px;
    opacity: 0.9;
}
.tiny {
    fill: #43484f;
    font: bold 8px "Liberation Sans", sans-serif;
    text-anchor: middle;
}
.dir-sm {
    fill: #6c7178;
    font: bold 14px "Liberation Sans", sans-serif;
    text-anchor: middle;
}
.wcs {
    display: flex;
    align-items: center;
    justify-content: space-between;
    width: 100px;
    height: 24px;
    padding: 0 9px 0 8px;
    border-radius: 8px;
    background-color: #66737b;
    color: #242c34;
    font-family: "Liberation Sans", sans-serif;
    line-height: 24px;
}
.wcs svg {
    width: 18px;
    height: 10px;
    fill: none;
    stroke: currentColor;
    stroke-width: 2;
}
.wcs.dim {
    position: absolute;
    top: 122px;
    right: 10px;
    background-color: rgba(130, 138, 145, 0.35);
    color: rgba(29, 36, 44, 0.6);
}
.axis {
    font: 300 34px Lato, sans-serif;
    text-anchor: middle;
}
.crisp {
    shape-rendering: crispEdges;
}
.frame {
    position: absolute;
    inset: 2px 0 2px 2px;
    pointer-events: none;
    box-shadow: inset 0 0 0 1px #173a5c, inset 0 0 0 2px #212830, inset 0 0 0 3px #1a4f84,
        inset 0 0 0 4px #212830, inset 0 0 0 5px #0a7cf5, inset 0 0 0 6px #212830,
        inset 0 0 0 7px #1a4f84, inset 0 0 0 8px #212830, inset 0 0 0 9px #1c3044;
}
.vp-labels {
    position: absolute;
    top: 10px;
    left: 30px;
    display: flex;
    gap: 12px;
    color: #a1a1a1;
    font-size: 24px;
    line-height: 26px;
}
.vp-labels button:first-child {
    width: 26px;
    text-align: left;
}
.vp-labels .bar {
    padding-left: 12px;
    border-left: 2px solid #8c8c8c;
}
.compass {
    position: absolute;
    top: 72px;
    right: 20px;
    display: flex;
    flex-direction: column;
    align-items: center;
    gap: 28px;
    width: 280px;
}
.cube {
    width: 280px;
    height: 240px;
}
.dir {
    fill: #a2a4a6;
    font: bold 32px "Liberation Sans", sans-serif;
    text-anchor: middle;
    dominant-baseline: central;
}
.face {
    fill: #585b60;
    font: bold 16px "Liberation Sans", sans-serif;
    text-anchor: middle;
}

/* command line */
.command {
    position: absolute;
    left: 4px;
    bottom: 2px;
    width: 994px;
    display: grid;
    grid-template-columns: 76px 1fr;
    gap: 2px;
    background: linear-gradient(#222931, #222931) 0 100% / 100% 48px no-repeat;
    color: #c2c4c7;
    font-size: 20px;
}
.history {
    grid-column: 2;
    position: relative;
    padding: 10px 8px 0;
    height: 128px;
    background-color: #3c4452;
    overflow: hidden;
}
.history p {
    margin: 0;
    line-height: 30px;
}
.thumb {
    position: absolute;
    right: 9px;
    bottom: 2px;
    width: 8px;
    height: 40px;
    border-radius: 4px;
    background-color: #9a9a9a;
}
.prompt, .entry {
    display: flex;
    align-items: center;
    height: 46px;
    background-color: #3c4452;
}
.prompt {
    grid-column: 1;
    justify-content: center;
    gap: 4px;
    padding-bottom: 4px;
    color: #c2c4c7;
    font-size: 24px;
    font-weight: 600;
}
.entry {
    padding: 0 8px 2px;
}
.entry input {
    flex: 1;
}
.entry input::placeholder {
    color: #a0a4aa;
    font-style: italic;
    opacity: 1;
}
.command .caret {
    background-color: #a6a6a6;
}

/* right panels */
.inspector {
    min-height: 0;
    border-left: 2px solid #222931;
    overflow: hidden;
}
.panel-tabs {
    display: flex;
    height: 44px;
    background-color: #2f3340;
    box-shadow: 0 2px #222931;
}
.panel-tabs button {
    display: flex;
    align-items: center;
    justify-content: center;
    width: 105px;
    border-right: 2px solid #222931;
}
.panel-tabs .on {
    background-color: #3c4452;
    box-shadow: 0 2px #3c4452;
}
.panel-tabs .more {
    width: 50px;
    margin-left: auto;
    border-left: 2px solid #222931;
    border-right: 0;
    background-color: #3c4452;
}
.panel-tabs svg {
    width: 30px;
    height: 30px;
}
.inspector h2 {
    color: #f0f0f0;
    font-size: 24px;
    line-height: 34px;
}
.layers {
    padding: 0 21px 18px;
    border-bottom: 2px solid #222931;
}
.layers > header {
    display: flex;
    align-items: flex-start;
    height: 69px;
    padding: 2px 0 0;
}
.layer-tools {
    display: flex;
    gap: 16px;
    margin: 11px auto 0 32px;
}
.exit {
    margin-right: -5px;
}
.pick, .field {
    display: flex;
    align-items: center;
    width: 100%;
    height: 38px;
    padding: 0 8px 0 11px;
    border: 2px solid #303d43;
    border-radius: 4px;
    background-color: #4f5a6b;
    color: #fff;
}
.pick select {
    margin-top: -2px;
}
.field {
    padding: 0 6px;
}
.pick.tall {
    height: 48px;
    margin: 0 0 8px 2px;
    width: calc(100% - 2px);
    padding-right: 6px;
}
.pick.mid {
    height: 42px;
}
.pick.off, .field.off {
    border-color: #384250;
    background-color: #424b5b;
    color: #8b9099;
}
.off select {
    opacity: 1;
    color: #8b9099;
}
.off .caret {
    background-color: #767c87;
}
.state {
    display: flex;
    align-items: center;
    gap: 6px;
    margin: 0 24px 0 8px;
    color: #6c7482;
}
.state svg {
    width: 28px;
    height: 28px;
}
.state .dot {
    margin-right: 6px;
}
.state .swatch {
    margin-left: 4px;
}
.disclose {
    display: flex;
    align-items: center;
    gap: 22px;
    height: 49px;
    padding: 0 0 10px 7px;
    color: #d0d0d0;
}
.disclose .caret {
    width: 18px;
    height: 15px;
    background-color: #8c8c8c;
}
.layer-list {
    min-height: 348px;
    border: 2px solid #2d3340;
    background-color: #4f5a6b;
}
.layer-list table {
    width: 100%;
    border-collapse: collapse;
    table-layout: fixed;
}
.layer-list th {
    height: 44px;
    padding: 0;
    border-right: 2px solid #2b303b;
    border-bottom: 2px solid #2b303b;
    background-color: #2f3340;
    color: #d9d9d9;
    text-align: left;
}
.layer-list th:last-child {
    border-right: 0;
}
.layer-list th svg {
    display: block;
    width: 30px;
    height: 30px;
    margin: 0 auto;
}
.c-eye { width: 50px; }
.c-sm { width: 43px; }
.c-md { width: 94px; }
.layer-list .c-name {
    background: conic-gradient(from 150deg at 50% 0, #4b90f0 60deg, transparent 0) 120px 34px / 14px 10px no-repeat, #4f5a6e;
    font-weight: 600;
}
.c-name span {
    display: flex;
    align-items: center;
    gap: 8px;
}
.layer-list .c-name svg {
    margin: 0;
}
.layer-list .c-name .sort {
    margin-left: auto;
    margin-right: 3px;
}
.layer-list td {
    height: 38px;
    padding: 0;
    color: #fff;
    line-height: 38px;
}
.layer-list td:first-child {
    text-align: center;
}
.layer-list td .dot, .layer-list td .swatch, .layer-list td .rule {
    margin-top: -4px;
    vertical-align: middle;
}
.layer-list td .swatch {
    margin-right: 18px;
    margin-left: 2px;
}
.layer-list td .rule {
    margin-left: 13px;
}
.layer-list .lw {
    padding-left: 12px;
}
.sel {
    background-color: #909cac;
}
.list-tools {
    display: flex;
    align-items: center;
    gap: 28px;
    height: 50px;
    padding: 0 8px 0 13px;
}
.list-tools .minus {
    margin-left: auto;
}
.minus i {
    display: block;
    width: 16px;
    height: 4px;
    background-color: #7d8390;
}
.cols {
    display: flex;
    align-items: center;
    gap: 2px;
}
.search {
    display: flex;
    align-items: center;
    gap: 8px;
    height: 41px;
    padding: 0 10px;
    border: 1px solid #2f3742;
    border-radius: 7px;
    background-color: #fff;
}
.search svg {
    width: 34px;
    height: 32px;
}
.search input {
    flex: 1;
    color: #333;
    font-family: Inter, sans-serif;
    font-size: 25px;
}
.search input::placeholder {
    color: #bfbfbf;
    opacity: 1;
}

.props {
    padding: 0 21px;
}
.props > header {
    display: flex;
    align-items: flex-start;
    height: 51px;
    margin-right: -5px;
}
.seg {
    display: flex;
    margin: 0 18px 0 auto;
    border: 2px solid #2f3742;
    border-top: 0;
    font-size: 16px;
}
.seg button {
    width: 57px;
    height: 25px;
    color: #8b9099;
    line-height: 24px;
}
.seg .on {
    width: 60px;
    border-left: 2px solid #2f3742;
    background-color: #4f5a6e;
    color: #fff;
}
.props > header > button {
    margin-top: -3px;
}
.props > header > button:last-child {
    margin-left: 16px;
}
.rows {
    display: grid;
    grid-template-columns: 286px minmax(0, 1fr);
    gap: 8px 19px;
    align-items: center;
    padding: 14px 6px 0 0;
}
.rows label {
    padding-bottom: 2px;
    color: #d4d4d4;
    line-height: 30px;
    text-align: right;
}
.rows .swatch {
    margin: 0 20px 0 6px;
}
.rows .rule {
    margin: 0 27px 0 3px;
}
.pair {
    display: flex;
    gap: 5px;
}
.slider {
    flex: 1;
    display: grid;
    height: 34px;
    margin: 2px 0 2px 6px;
    border: 2px solid #303d43;
    background: linear-gradient(#8b9099, #8b9099) 49% 90% / 1px 12px no-repeat, #4f5a6b;
}
.slider input, .slider output {
    grid-area: 1 / 1;
}
.slider input {
    appearance: none;
    width: 100%;
}
.slider input::-webkit-slider-thumb {
    appearance: none;
    width: 3px;
    height: 30px;
    background: linear-gradient(#5b96ee 6px, transparent 6px 24px, #5b96ee 24px);
}
.slider output {
    justify-self: end;
    padding-right: 6px;
    color: #fff;
    line-height: 30px;
    pointer-events: none;
}
.mini {
    display: flex;
    align-items: center;
    gap: 10px;
    width: 78px;
    height: 38px;
    padding-left: 12px;
    border: 2px solid #303d43;
    border-radius: 4px;
    background-color: #4f5a6b;
}
.mini svg {
    width: 30px;
    height: 30px;
}
.pair .field {
    flex: 1;
    width: auto;
}
.pickh {
    width: 39px;
    height: 36px;
    padding: 0 1px;
    border: 2px solid #303d43;
    border-radius: 3px;
}

/* status bar */
.status {
    grid-column: 2 / 4;
    display: flex;
    align-items: center;
    padding-right: 10px;
    border: solid #222931;
    border-width: 2px 0 2px 2px;
}
.sheet-tab {
    align-self: stretch;
    padding: 0 16px;
    border-right: 2px solid #333b47;
    color: #b4b7bc;
}
.sheet-tab.on {
    padding: 0 23px;
    background-color: #4f5a6e;
    color: #fff;
    font-weight: 600;
}
.sheet-tab.add {
    padding: 0 9px;
}
.coords {
    margin-left: auto;
    margin-right: 8px;
    font-size: 25px;
}
.toggles {
    display: flex;
    gap: 4px;
}
.toggles button {
    display: flex;
    align-items: center;
    justify-content: center;
    width: 40px;
    height: 40px;
}
.toggles .on {
    background-color: #688ebe;
}
.ratio {
    display: flex;
    align-items: center;
    gap: 4px;
    width: 60px;
    color: #b4b7bc;
}
.ratio select {
    flex: none;
    width: 36px;
}
```

FILE: script.js
```js
// draws the ground grid, axes and chess board of each viewport
var NS = 'http://www.w3.org/2000/svg';

// screen vectors of one board square along X, Y and the slab thickness
var views = {
    iso: {x: [64.1, 37], y: [64.1, -37], h: 7.4, top: '#a6a8a5', fx: '#8f8f90', fy: '#9fa19e'},
    side: {x: [46, -9.7], y: [-22.5, -19.6], h: 4.5, top: '#9f9f9f', fx: '#c3c5c1', fy: '#a4a4a2'}
};

function add(parent, tag, attrs, text) {
    var el = document.createElementNS(NS, tag);
    for (var k in attrs) {
        el.setAttribute(k, attrs[k]);
    }
    if (text) {
        el.textContent = text;
    }
    parent.appendChild(el);
    return el;
}

function drawScene(svg) {
    var v = views[svg.dataset.view];
    var o = svg.dataset.origin.split(',').map(Number);

    function pt(i, j, z) {
        return [o[0] + i * v.x[0] + j * v.y[0], o[1] + i * v.x[1] + j * v.y[1] - (z || 0)];
    }
    function line(a, b, color, w, cls) {
        add(svg, 'line', {x1: a[0], y1: a[1], x2: b[0], y2: b[1], stroke: color, 'stroke-width': w || 1, 'class': cls || ''});
    }
    function poly(pts, color) {
        add(svg, 'polygon', {points: pts.join(' '), fill: color});
    }

    // minor lines every 1.25 squares, major every fifth
    [false, true].forEach(function (major) {
        for (var n = -40; n <= 40; n++) {
            if ((n % 5 === 0) !== major) {
                continue;
            }
            var c = major ? '#343d49' : '#262e38';
            line(pt(n * 1.25, -60), pt(n * 1.25, 60), c);
            line(pt(-60, n * 1.25), pt(60, n * 1.25), c);
        }
    });
    line(pt(0, 0), pt(60, 0), '#7c2529');
    line(pt(0, 0), pt(0, 60), '#227326');

    // slabs, far ones first
    for (var j = 7; j >= 0; j--) {
        for (var i = 0; i < 8; i++) {
            var a = svg.dataset.view === 'iso' ? i : 7 - i;
            if ((a + j) % 2) {
                continue;
            }
            var h = v.h;
            if (svg.dataset.view === 'iso') {
                poly([pt(a, j), pt(a + 1, j), pt(a + 1, j, h), pt(a, j, h)], v.fx);
                poly([pt(a + 1, j), pt(a + 1, j + 1), pt(a + 1, j + 1, h), pt(a + 1, j, h)], v.fy);
            } else {
                poly([pt(a, j), pt(a + 1, j), pt(a + 1, j, h), pt(a, j, h)], v.fx);
                poly([pt(a, j), pt(a, j + 1), pt(a, j + 1, h), pt(a, j, h)], v.fy);
            }
            poly([pt(a, j, h), pt(a + 1, j, h), pt(a + 1, j + 1, h), pt(a, j + 1, h)], v.top);
        }
    }

    if (svg.dataset.view === 'iso') {
        // ucs icon
        line([1006, 926], [1073, 888], '#3a8636', 10);
        line([1008, 929], [1074, 891], '#5a9f55', 3);
        line([1006, 928], [1073, 966], '#c85a5a', 10);
        line([1007, 927], [1074, 965], '#ee8684', 4);
        line([1004, 845], [1004, 931], '#3b629f', 10);
        line([1004, 845], [1004, 852], '#7fb4f5', 8);
        add(svg, 'text', {x: 1013, y: 839, 'class': 'axis', fill: '#1560e0'}, 'Z');
        add(svg, 'text', {x: 1080, y: 879, 'class': 'axis', fill: '#1f9a1f'}, 'Y');
        add(svg, 'text', {x: 1080, y: 959, 'class': 'axis', fill: '#f03c3c'}, 'X');

        // cursor
        line([1749, 1358], [1749, 1490], '#7a76d8', 1, 'crisp');
        line([1713, 1467], [1825, 1402], '#7be07b', 1, 'crisp');
        line([1713, 1424], [1825, 1490], '#f08080', 1, 'crisp');
        add(svg, 'rect', {x: 1743, y: 1440, width: 12, height: 12, fill: '#212830', stroke: '#fff', 'stroke-width': 1, 'class': 'crisp'});
    }
}

document.querySelectorAll('.scene').forEach(drawScene);
```
